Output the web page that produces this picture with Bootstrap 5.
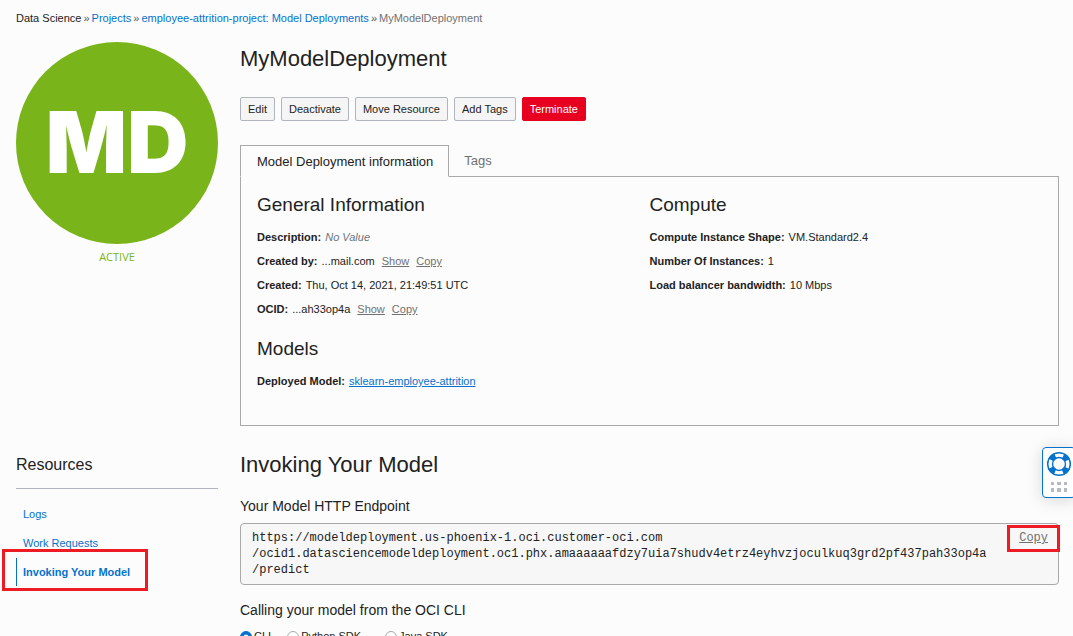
<!DOCTYPE html>
<html lang="en">
<head>
<meta charset="utf-8">
<meta name="viewport" content="width=device-width, initial-scale=1">
<title>MyModelDeployment</title>
<link href="https://cdn.jsdelivr.net/npm/bootstrap@5.3.0/dist/css/bootstrap.min.css" rel="stylesheet">
<style>
:root { --ink: #222; --link: #0572ce; --muted-ink: #717171; --line: #a9a9a9; --paper: #fcfcfc; --hot: #ed1c24; }
body { background: var(--paper); color: var(--ink); font-family: "Liberation Sans", Arial, sans-serif; font-size: 11px; line-height: 16px; }
.page { height: 100vh; overflow: hidden; padding: 10px 14px 0 16px; }
a { color: var(--link); text-decoration: none; }
.breadcrumb { --bs-breadcrumb-divider: "»"; --bs-breadcrumb-font-size: 11px; --bs-breadcrumb-item-padding-x: 2px; --bs-breadcrumb-divider-color: #555; --bs-breadcrumb-item-active-color: #717171; }
.side-col { flex: 0 0 202px; }
.gap-cols { gap: 22px; }
.status-disc { aspect-ratio: 1; background: #79b51a; color: #fff; font: 900 85px/84px Inter, "Liberation Sans", sans-serif; }
.status-text { color: #79b51a; font-family: "Open Sans", sans-serif; line-height: 26px; }
.title-lg { font-size: 22px; line-height: 34px; font-weight: 400; margin: 0; }
.title-md { font-size: 19px; line-height: 24px; font-weight: 400; margin: 0; }
.title-sm { font-size: 14px; line-height: 20px; font-weight: 400; margin: 0; }
.title-side { font-size: 16px; line-height: 34px; font-weight: 400; margin: 0; }
.title-lg + .title-sm { margin-top: 14px; }
.actions { gap: 6px; margin: 21px 0 24px; }
.actions .btn { font-size: 11px; line-height: 16px; padding: 3px 7px; border-radius: 2px; --bs-btn-color: #222; --bs-btn-bg: #f5f5f5; --bs-btn-border-color: #b0b5bd; }
.actions .btn-stop { --bs-btn-color: #fff; --bs-btn-bg: #e80020; --bs-btn-border-color: #e80020; }
.nav-tabs { --bs-nav-tabs-border-color: var(--line); --bs-nav-tabs-border-radius: 0; --bs-nav-tabs-link-active-bg: var(--paper); --bs-nav-tabs-link-active-color: #222; --bs-nav-tabs-link-active-border-color: var(--line) var(--line) var(--paper); --bs-nav-link-color: #717171; }
.nav-tabs .nav-link { font-size: 13px; line-height: 20px; padding: 5px 14px; }
.nav-tabs .nav-link.active { padding: 6px 15px 4px 16px; }
.panel { border: 1px solid var(--line); border-top: 0; padding: 16px 16px 32px; }
.facts { line-height: 24px; margin: 8px 0 16px; }
.facts dt { font-weight: 700; }
.facts dd { margin: 0 0 0 4px; }
.quiet { color: var(--muted-ink); text-decoration: underline; background: none; border: 0; padding: 0; }
.facts .quiet { margin-left: 7px; }
.lower { margin-top: 22px; }
.side-rule { border-top: 1px solid #b0b5bd; margin-top: 6px; padding-top: 11px; }
.side-rule .nav-link { color: var(--link); line-height: 28px; padding: 0 0 0 6px; margin-bottom: 1px; border-left: 1px solid transparent; }
.side-rule .nav-link.active { border-left-color: var(--link); font-weight: 700; }
.outline-hot { border: 3px solid var(--hot); position: absolute; pointer-events: none; }
.outline-nav { inset: -9px auto -4px -14px; width: 146px; }
.outline-copy { inset: -5px -12px -6px -12px; }
.endpoint { background: #f7f7f7; border: 1px solid var(--line); border-radius: 4px; padding: 6px 10px 6px 11px; margin: 7px 0 15px; font: 12px/16px "Liberation Mono", monospace; }
.endpoint code { color: #222; font: inherit; }
.radios { margin-top: 8px; line-height: 16px; }
.radios .form-check-input { width: 12px; height: 12px; margin: 3px 2px 0 0; border-color: #a9a9a9; background-color: #fff; }
.radios .form-check-input:checked { background-color: var(--link); border-color: var(--link); }
.help-dock { position: fixed; right: -3px; top: 447px; width: 34px; height: 51px; background: #fff; border: 1px solid var(--link); border-radius: 4px; padding: 0; box-shadow: 0 2px 16px rgba(0,0,0,.15); }
</style>
</head>
<body>
<div class="page">
  <nav aria-label="breadcrumb">
    <ol class="breadcrumb mb-0">
      <li class="breadcrumb-item">Data Science</li>
      <li class="breadcrumb-item"><a href="#">Projects</a></li>
      <li class="breadcrumb-item"><a href="#">employee-attrition-project: Model Deployments</a></li>
      <li class="breadcrumb-item active" aria-current="page">MyModelDeployment</li>
    </ol>
  </nav>

  <div class="d-flex gap-cols mt-3">
    <div class="side-col text-center">
      <div class="status-disc rounded-circle d-flex align-items-center justify-content-center">MD</div>
      <div class="status-text">ACTIVE</div>
    </div>
    <main class="flex-grow-1">
      <h1 class="title-lg">MyModelDeployment</h1>
      <div class="actions d-flex">
        <button type="button" class="btn">Edit</button>
        <button type="button" class="btn">Deactivate</button>
        <button type="button" class="btn">Move Resource</button>
        <button type="button" class="btn">Add Tags</button>
        <button type="button" class="btn btn-stop">Terminate</button>
      </div>
      <ul class="nav nav-tabs">
        <li class="nav-item"><a class="nav-link active" href="#">Model Deployment information</a></li>
        <li class="nav-item"><a class="nav-link" href="#">Tags</a></li>
      </ul>
      <div class="panel">
        <div class="row g-0">
          <div class="col-6">
            <h2 class="title-md">General Information</h2>
            <dl class="facts">
              <div class="d-flex"><dt>Description:</dt><dd class="fst-italic text-secondary">No Value</dd></div>
              <div class="d-flex"><dt>Created by:</dt><dd>...mail.com<a class="quiet" href="#">Show</a><a class="quiet" href="#">Copy</a></dd></div>
              <div class="d-flex"><dt>Created:</dt><dd>Thu, Oct 14, 2021, 21:49:51 UTC</dd></div>
              <div class="d-flex"><dt>OCID:</dt><dd>...ah33op4a<a class="quiet" href="#">Show</a><a class="quiet" href="#">Copy</a></dd></div>
            </dl>
            <h2 class="title-md">Models</h2>
            <dl class="facts mb-0">
              <div class="d-flex"><dt>Deployed Model:</dt><dd><a class="text-decoration-underline" href="#">sklearn-employee-attrition</a></dd></div>
            </dl>
          </div>
          <div class="col-6">
            <h2 class="title-md">Compute</h2>
            <dl class="facts">
              <div class="d-flex"><dt>Compute Instance Shape:</dt><dd>VM.Standard2.4</dd></div>
              <div class="d-flex"><dt>Number Of Instances:</dt><dd>1</dd></div>
              <div class="d-flex"><dt>Load balancer bandwidth:</dt><dd>10 Mbps</dd></div>
            </dl>
          </div>
        </div>
      </div>
    </main>
  </div>

  <div class="d-flex gap-cols lower">
    <aside class="side-col">
      <h2 class="title-side">Resources</h2>
      <nav class="nav flex-column side-rule">
        <a class="nav-link" href="#">Logs</a>
        <a class="nav-link" href="#">Work Requests</a>
        <div class="position-relative">
          <a class="nav-link active" href="#">Invoking Your Model</a>
          <span class="outline-hot outline-nav"></span>
        </div>
      </nav>
    </aside>
    <section class="flex-grow-1">
      <h2 class="title-lg">Invoking Your Model</h2>
      <h3 class="title-sm">Your Model HTTP Endpoint</h3>
      <div class="endpoint d-flex justify-content-between align-items-start">
        <code>https://modeldeployment.us-phoenix-1.oci.customer-oci.com<br>/ocid1.datasciencemodeldeployment.oc1.phx.amaaaaaafdzy7uia7shudv4etrz4eyhvzjoculkuq3grd2pf437pah33op4a<br>/predict</code>
        <span class="position-relative d-flex">
          <button type="button" class="quiet">Copy</button>
          <span class="outline-hot outline-copy"></span>
        </span>
      </div>
      <h3 class="title-sm">Calling your model from the OCI CLI</h3>
      <div class="radios d-flex">
        <div class="d-flex me-3"><input class="form-check-input" type="radio" name="client" id="cli" checked><label for="cli">CLI</label></div>
        <div class="d-flex me-4"><input class="form-check-input" type="radio" name="client" id="py"><label for="py">Python SDK</label></div>
        <div class="d-flex"><input class="form-check-input" type="radio" name="client" id="java"><label for="java">Java SDK</label></div>
      </div>
    </section>
  </div>
</div>

<button type="button" class="help-dock" aria-label="Help">
  <svg class="d-block mx-auto" width="26" height="44" viewBox="0 0 26 44" aria-hidden="true">
    <g fill="none" stroke="#0572ce">
      <circle cx="13" cy="13" r="9" stroke-width="6" stroke-dasharray="6 8.137" stroke-dashoffset="-4.069"/>
      <circle cx="13" cy="13" r="11.3" stroke-width="1.5"/>
      <circle cx="13" cy="13" r="6.5" stroke-width="1.4"/>
    </g>
    <path fill="#b5bac3" d="M5 31h3v3h-3zM11 31h4v3h-4zM18 31h3v3h-3zM5 37h3v4h-3zM11 37h4v4h-4zM18 37h3v4h-3z"/>
  </svg>
</button>
<script src="https://cdn.jsdelivr.net/npm/bootstrap@5.3.0/dist/js/bootstrap.bundle.min.js"></script>
</body>
</html>
